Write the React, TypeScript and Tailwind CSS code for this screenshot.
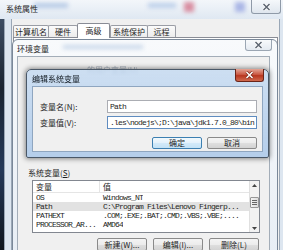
import React from "react";

const mono = "font-['Liberation_Mono','Noto_Sans_CJK_SC',monospace] tracking-[-0.8px]";

function CloseX({ red }: { red?: boolean }) {
  return (
    <svg width="9" height="8" viewBox="0 0 9 8">
      <path d="M1.5 1 L7.5 7 M7.5 1 L1.5 7" stroke={red ? "#7d2a1c" : "#ffffff"} strokeWidth="3" />
      <path d="M1.5 1 L7.5 7 M7.5 1 L1.5 7" stroke={red ? "#ffffff" : "#5d6672"} strokeWidth="1.5" />
    </svg>
  );
}

function Btn({ children, def }: { children: React.ReactNode; def?: boolean }) {
  return (
    <div
      className={
        def
          ? "h-[12px] w-[50px] flex items-center justify-center rounded-[2px] border border-[#3c7fb1] bg-[linear-gradient(to_bottom,#f2f9fd,#e3f1fb_50%,#d3eaf9_50%,#c4e2f6)]"
          : "h-[12px] w-[50px] flex items-center justify-center rounded-[2px] border border-[#8a8a8a] bg-[linear-gradient(to_bottom,#f4f4f4,#ececec_50%,#dfdfdf_50%,#d3d3d3)]"
      }
    >
      {children}
    </div>
  );
}

function Tab({ children, w, sel }: { children: React.ReactNode; w: string; sel?: boolean }) {
  return (
    <div
      className={
        sel
          ? `${w} h-[15px] -mb-[1px] z-10 flex items-start justify-center pt-[3px] bg-white border border-b-0 border-[#898c95] rounded-t-[2px]`
          : `${w} h-[12px] flex items-start justify-center pt-[2px] bg-[linear-gradient(to_bottom,#fbfbfb,#ececec)] border border-b-0 border-[#9a9da5] rounded-t-[2px] -mr-[1px]`
      }
    >
      {children}
    </div>
  );
}

const rows: [string, string, boolean][] = [
  ["OS", "Windows_NT", false],
  ["Path", "C:\\Program Files\\Lenovo Fingerp...", true],
  ["PATHEXT", ".COM;.EXE;.BAT;.CMD;.VBS;.VBE;....", false],
  ["PROCESSOR_AR...", "AMD64", false],
];

export default function App() {
  return (
    <div className="relative w-[283px] h-[250px] overflow-hidden bg-[#d9e4f0] text-[#1e1e1e] font-['Noto_Sans_CJK_SC','Liberation_Sans',sans-serif] text-[8px] leading-none">
      {/* outer window title bar */}
      <div className="relative h-[19px] bg-[linear-gradient(to_bottom,#f3f6fa,#dfe8f2)] flex items-start overflow-hidden">
        <div className="absolute left-[34px] top-[3px] w-[34px] h-[5px] bg-[#b7cbe6] blur-[2px]" />
        <div className="absolute left-[148px] top-[3px] w-[28px] h-[5px] bg-[#bdd0ea] blur-[2px]" />
        <div className="absolute left-[184px] top-[2px] w-[10px] h-[10px] bg-[#d98fa2] blur-[2px]" />
        <div className="absolute left-[235px] top-[2px] w-[10px] h-[10px] bg-[#aab6e6] blur-[2px]" />
        <span className="relative ml-[6px] mt-[5px]">系统属性</span>
        <div className="relative ml-auto mr-[2px] w-[30px] h-[14px] flex items-center justify-center rounded-b-[3px] border border-t-0 border-[#8f9aa8] bg-[linear-gradient(to_bottom,#f5f8fb,#dfe6ee)]">
          <CloseX />
        </div>
      </div>
      {/* outer window body */}
      <div className="flex h-[231px]">
        <div className="w-[4px] bg-[linear-gradient(to_bottom,#3d4d63,#1a2431_30%,#24395a_65%,#10161e)]" />
        <div className="w-[8px] bg-[#dde6f0] border-l border-r border-[#9aa7b6]" />
        <div className="flex-1 flex flex-col bg-[#f0f0f0]">
          <div className="flex items-end h-[18px] pl-[1px]">
            <Tab w="w-[36px]">计算机名</Tab>
            <Tab w="w-[30px]">硬件</Tab>
            <Tab w="w-[33px]" sel>高级</Tab>
            <Tab w="w-[38px]">系统保护</Tab>
            <Tab w="w-[29px]">远程</Tab>
          </div>
          <div className="flex-1 mx-[1px] bg-white border border-[#898c95]" />
        </div>
        <div className="w-[4px] bg-[#dde6f0] border-l border-[#9aa7b6]" />
      </div>

      {/* 环境变量 dialog */}
      <div className="absolute left-[12px] top-[39px] w-[266px] h-[215px] flex flex-col border border-[#7a8899] rounded-t-[6px] bg-[linear-gradient(to_bottom,#f8fafc,#e8eef5)]">
        <div className="relative h-[16px] flex items-start">
          <div className="absolute left-[50px] top-[5px] w-[80px] h-[4px] bg-[#c9d8ea] blur-[2px]" />
          <span className="relative ml-[4px] mt-[5px]">环境变量</span>
          <div className="absolute right-[5px] top-0 w-[27px] h-[11px] flex items-center justify-center rounded-b-[3px] border border-t-0 border-[#9ba6b3] bg-[linear-gradient(to_bottom,#f8fafc,#e4eaf1)]">
            <CloseX />
          </div>
        </div>
        <div className="flex-1 ml-[4px] mr-[7px] flex flex-col bg-[#f0f0f0] border border-[#a3adb8]">
          <div className="mt-[9px] ml-[69px] h-[8px] text-[#a3adb9] blur-[0.4px]">的用户变量(U)</div>
          <div className="mt-[95px] ml-[10px] h-[8px]">
            系统变量(<span className="underline">S</span>)
          </div>
          <div className="mt-[3px] ml-[14px] w-[228px] h-[53px] flex bg-white border border-[#828790]">
            <div className="flex-1 flex flex-col">
              <div className="h-[12px] flex items-center border-b border-[#e5e5e5]">
                <div className="w-[67px] h-full flex items-center pl-[3px] border-r border-[#e5e5e5]">变量</div>
                <div className="pl-[3px]">值</div>
              </div>
              {rows.map(([k, v, sel]) => (
                <div key={k} className={sel ? "h-[9px] flex items-center bg-[#e2e2e2]" : "h-[9px] flex items-center"}>
                  <div className={`w-[67px] pl-[3px] whitespace-nowrap overflow-hidden ${mono}`}>{k}</div>
                  <div className={`pl-[3px] whitespace-nowrap overflow-hidden ${mono}`}>{v}</div>
                </div>
              ))}
            </div>
            <div className="w-[10px] flex flex-col items-center bg-[#f2f2f2] border-l border-[#e0e0e0]">
              <div className="h-[9px] flex items-center justify-center">
                <svg width="5" height="3" viewBox="0 0 5 3"><path d="M0 3 L2.5 0 L5 3Z" fill="#444" /></svg>
              </div>
              <div className="mt-[7px] w-[9px] h-[11px] flex flex-col items-center justify-center gap-[1px] rounded-[1px] border border-[#979797] bg-[linear-gradient(to_right,#f4f4f4,#dcdcdc)]">
                <div className="w-[5px] h-px bg-[#666]" />
                <div className="w-[5px] h-px bg-[#666]" />
                <div className="w-[5px] h-px bg-[#666]" />
              </div>
              <div className="mt-auto h-[8px] flex items-center justify-center">
                <svg width="5" height="3" viewBox="0 0 5 3"><path d="M0 0 L2.5 3 L5 0Z" fill="#444" /></svg>
              </div>
            </div>
          </div>
          <div className="mt-[5px] ml-[79px] flex gap-[6px]">
            <div className="h-[13px] w-[50px] flex items-center justify-center rounded-[2px] border border-[#8a8a8a] bg-[linear-gradient(to_bottom,#f4f4f4,#ececec_50%,#dfdfdf_50%,#d3d3d3)]">
              新建(W)...
            </div>
            <div className="h-[13px] w-[50px] flex items-center justify-center rounded-[2px] border border-[#8a8a8a] bg-[linear-gradient(to_bottom,#f4f4f4,#ececec_50%,#dfdfdf_50%,#d3d3d3)]">
              编辑(I)...
            </div>
            <div className="h-[13px] w-[50px] flex items-center justify-center rounded-[2px] border border-[#8a8a8a] bg-[linear-gradient(to_bottom,#f4f4f4,#ececec_50%,#dfdfdf_50%,#d3d3d3)]">
              删除(L)
            </div>
          </div>
        </div>
      </div>

      {/* 编辑系统变量 dialog */}
      <div className="absolute left-[26px] top-[69px] w-[243px] h-[89px] flex flex-col rounded-t-[5px] rounded-b-[2px] border border-[#4a5868] bg-[linear-gradient(to_bottom,rgba(196,218,242,0.8),rgba(176,203,234,0.93))] backdrop-blur-[1.5px] shadow-[0_0_5px_1px_rgba(0,0,0,0.45)]">
        <div className="relative h-[16px] flex items-start">
          <span className="ml-[5px] mt-[5px] text-[#101820]">编辑系统变量</span>
          <div className="absolute right-[4px] -top-px w-[29px] h-[13px] flex items-center justify-center rounded-b-[3px] border border-t-0 border-[#6b2418] bg-[linear-gradient(to_bottom,#e3a596,#ca5a45_45%,#b8361f_55%,#d06a4f)]">
            <CloseX red />
          </div>
        </div>
        <div className="flex-1 mx-[5px] mb-[5px] flex flex-col bg-[#f0f0f0] border border-[#8fa6c0]">
          <div className="mt-[13px] flex items-center h-[13px]">
            <div className="w-[74px] pl-[7px]">变量名(N):</div>
            <div className={`w-[150px] h-[13px] flex items-center pl-[2px] bg-white border border-[#abadb3] ${mono}`}>Path</div>
          </div>
          <div className="mt-[3px] flex items-center h-[13px]">
            <div className="w-[74px] pl-[7px]">变量值(V):</div>
            <div className={`w-[150px] h-[13px] flex items-center pl-[2px] bg-white border border-[#5f8cc0] overflow-hidden whitespace-nowrap ${mono}`}>
              .les\nodejs\;D:\java\jdk1.7.0_80\bin
            </div>
          </div>
          <div className="mt-[8px] flex justify-end gap-[5px] pr-[5px]">
            <Btn def>确定</Btn>
            <Btn>取消</Btn>
          </div>
        </div>
      </div>
    </div>
  );
}
